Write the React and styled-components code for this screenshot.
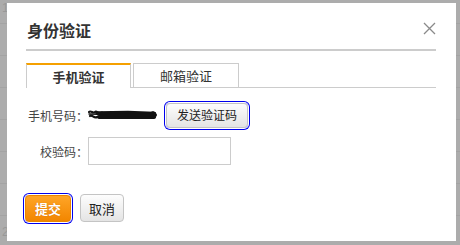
import React from 'react';
import styled, { createGlobalStyle } from 'styled-components';

const GlobalStyle = createGlobalStyle`
  html, body { margin: 0; padding: 0; }
  body {
    background: #acacac;
    font-family: "Noto Sans CJK SC", "Liberation Sans", sans-serif;
  }
`;

const Screen = styled.div`
  position: relative;
  width: 460px;
  height: 245px;
  overflow: hidden;
  background: #acacac;
`;

// table behind the modal backdrop
const BackTable = styled.div`
  margin-top: -8px;
  display: flex;
  flex-direction: column;
`;

const BackRow = styled.div`
  height: 31px;
  display: flex;
  align-items: center;
  padding-left: 2px;
  border-bottom: 1px solid #a3a3a3;
  color: #989898;
  font-family: "Liberation Sans", sans-serif;
  font-size: 12px;
  white-space: nowrap;
`;

const Dialog = styled.div`
  position: absolute;
  left: 7px;
  top: 3px;
  width: 449px;
  height: 238px;
  box-sizing: border-box;
  background: #fff;
  padding: 16px 20px 0 19px;
  display: flex;
  flex-direction: column;
`;

const Header = styled.div`
  display: flex;
  align-items: center;
  justify-content: space-between;
  height: 22px;
  padding: 0 0 8px 1px;
  border-bottom: 2px solid #cccccc;
`;

const Title = styled.h2`
  margin: 0;
  font-size: 16px;
  font-weight: bold;
  color: #333;
  line-height: 22px;
`;

const CloseButton = styled.button`
  width: 13px;
  height: 13px;
  padding: 0;
  border: 0;
  background: none;
  margin-top: -4px;
  display: flex;
  cursor: pointer;
`;

const Tabs = styled.div`
  margin-top: 12px;
  display: flex;
  align-items: flex-end;
  gap: 2px;
  border-bottom: 1px solid #cccccc;
`;

const Tab = styled.div`
  width: ${p => (p.$active ? 105 : 106)}px;
  height: ${p => (p.$active ? 25 : 24)}px;
  margin-bottom: ${p => (p.$active ? -1 : 0)}px;
  box-sizing: border-box;
  border: 1px solid #cccccc;
  border-top: ${p => (p.$active ? '2px solid #f5a000' : '1px solid #cccccc')};
  border-bottom: 0;
  background: #fff;
  display: flex;
  align-items: center;
  justify-content: center;
  font-size: 13px;
  font-weight: ${p => (p.$active ? 'bold' : 'normal')};
  color: #333;
`;

const Form = styled.div`
  margin-top: 13px;
  display: flex;
  flex-direction: column;
  gap: 8px;
`;

const Row = styled.div`
  display: flex;
  align-items: center;
  height: 28px;
`;

const Label = styled.span`
  flex-shrink: 0;
  width: 62px;
  text-align: right;
  white-space: nowrap;
  font-size: 12px;
  color: #444;
`;

const Redacted = styled.svg`
  flex-shrink: 0;
  width: 69px;
  height: 12px;
  display: block;
`;

const GrayButton = styled.button`
  flex-shrink: 0;
  height: ${p => p.$h || 24}px;
  padding: 0 ${p => p.$px || 9}px;
  margin-left: ${p => p.$ml || 0}px;
  border: 1px solid #c4c4c4;
  border-radius: 4px;
  background: linear-gradient(#fdfdfd, #e4e4e4);
  color: #222;
  font-family: inherit;
  font-size: ${p => p.$fs || 12}px;
  line-height: 1;
  box-shadow: ${p => (p.$focus ? '0 0 0 1px #fff, 0 0 0 2px #0000ee' : 'none')};
  cursor: pointer;
`;

const Input = styled.input`
  width: 143px;
  height: 28px;
  box-sizing: border-box;
  border: 1px solid #cccccc;
  padding: 0 6px;
  font-size: 13px;
  outline: none;
`;

const Actions = styled.div`
  margin-top: 29px;
  margin-left: -1px;
  display: flex;
  align-items: center;
  gap: 9px;
`;

const PrimaryButton = styled.button`
  width: 46px;
  height: 27px;
  border: 1px solid #e88600;
  border-radius: 4px;
  background: linear-gradient(#ffa527, #f28600);
  color: #fff;
  font-family: inherit;
  font-size: 13px;
  font-weight: bold;
  padding: 0;
  text-shadow: 0 0 1px rgba(160, 70, 0, 0.5);
  box-shadow: 0 0 0 1px #fff, 0 0 0 2px #0000ee;
  cursor: pointer;
`;

const CloseIcon = () => (
  <svg width="13" height="13" viewBox="0 0 13 13">
    <path d="M1 1 L12 12 M12 1 L1 12" stroke="#8a8a8a" strokeWidth="1.3" fill="none" />
  </svg>
);

// phone number blacked out in the screenshot
const Scribble = () => (
  <Redacted viewBox="0 0 69 12">
    <g stroke="#111" fill="none" strokeLinecap="round" strokeLinejoin="round">
      <path d="M1 3 C3 1 5 5 7 3 C9 1 10 6 13 4 C15 2 16 7 19 5" strokeWidth="2.2" />
      <path d="M2 7 C4 5 6 10 9 8 C11 6 13 10 16 8" strokeWidth="2.2" />
      <path d="M1 5 L22 5.5" strokeWidth="1.4" />
      <path d="M9 4 L40 3.5 L66 4.5" strokeWidth="3.6" />
      <path d="M11 8 L66 8" strokeWidth="4" />
      <path d="M20 6 L62 6" strokeWidth="3" />
      <circle cx="65" cy="6" r="3.3" fill="#111" strokeWidth="1" />
    </g>
  </Redacted>
);

const backRows = ['1921403106', '', '', '', '', '', '', '20252125430120c0e'];

export default function App() {
  return (
    <>
      <GlobalStyle />
      <Screen>
        <BackTable>
          {backRows.map((t, i) => (
            <BackRow key={i}>{t}</BackRow>
          ))}
        </BackTable>

        <Dialog>
          <Header>
            <Title>身份验证</Title>
            <CloseButton aria-label="关闭">
              <CloseIcon />
            </CloseButton>
          </Header>

          <Tabs>
            <Tab $active>手机验证</Tab>
            <Tab>邮箱验证</Tab>
          </Tabs>

          <Form>
            <Row>
              <Label>手机号码：</Label>
              <Scribble />
              <GrayButton $focus $ml={9} $h={25} $px={10}>发送验证码</GrayButton>
            </Row>
            <Row>
              <Label>校验码：</Label>
              <Input />
            </Row>
          </Form>

          <Actions>
            <PrimaryButton>提交</PrimaryButton>
            <GrayButton $h={28} $px={8} $fs={13}>取消</GrayButton>
          </Actions>
        </Dialog>
      </Screen>
    </>
  );
}
